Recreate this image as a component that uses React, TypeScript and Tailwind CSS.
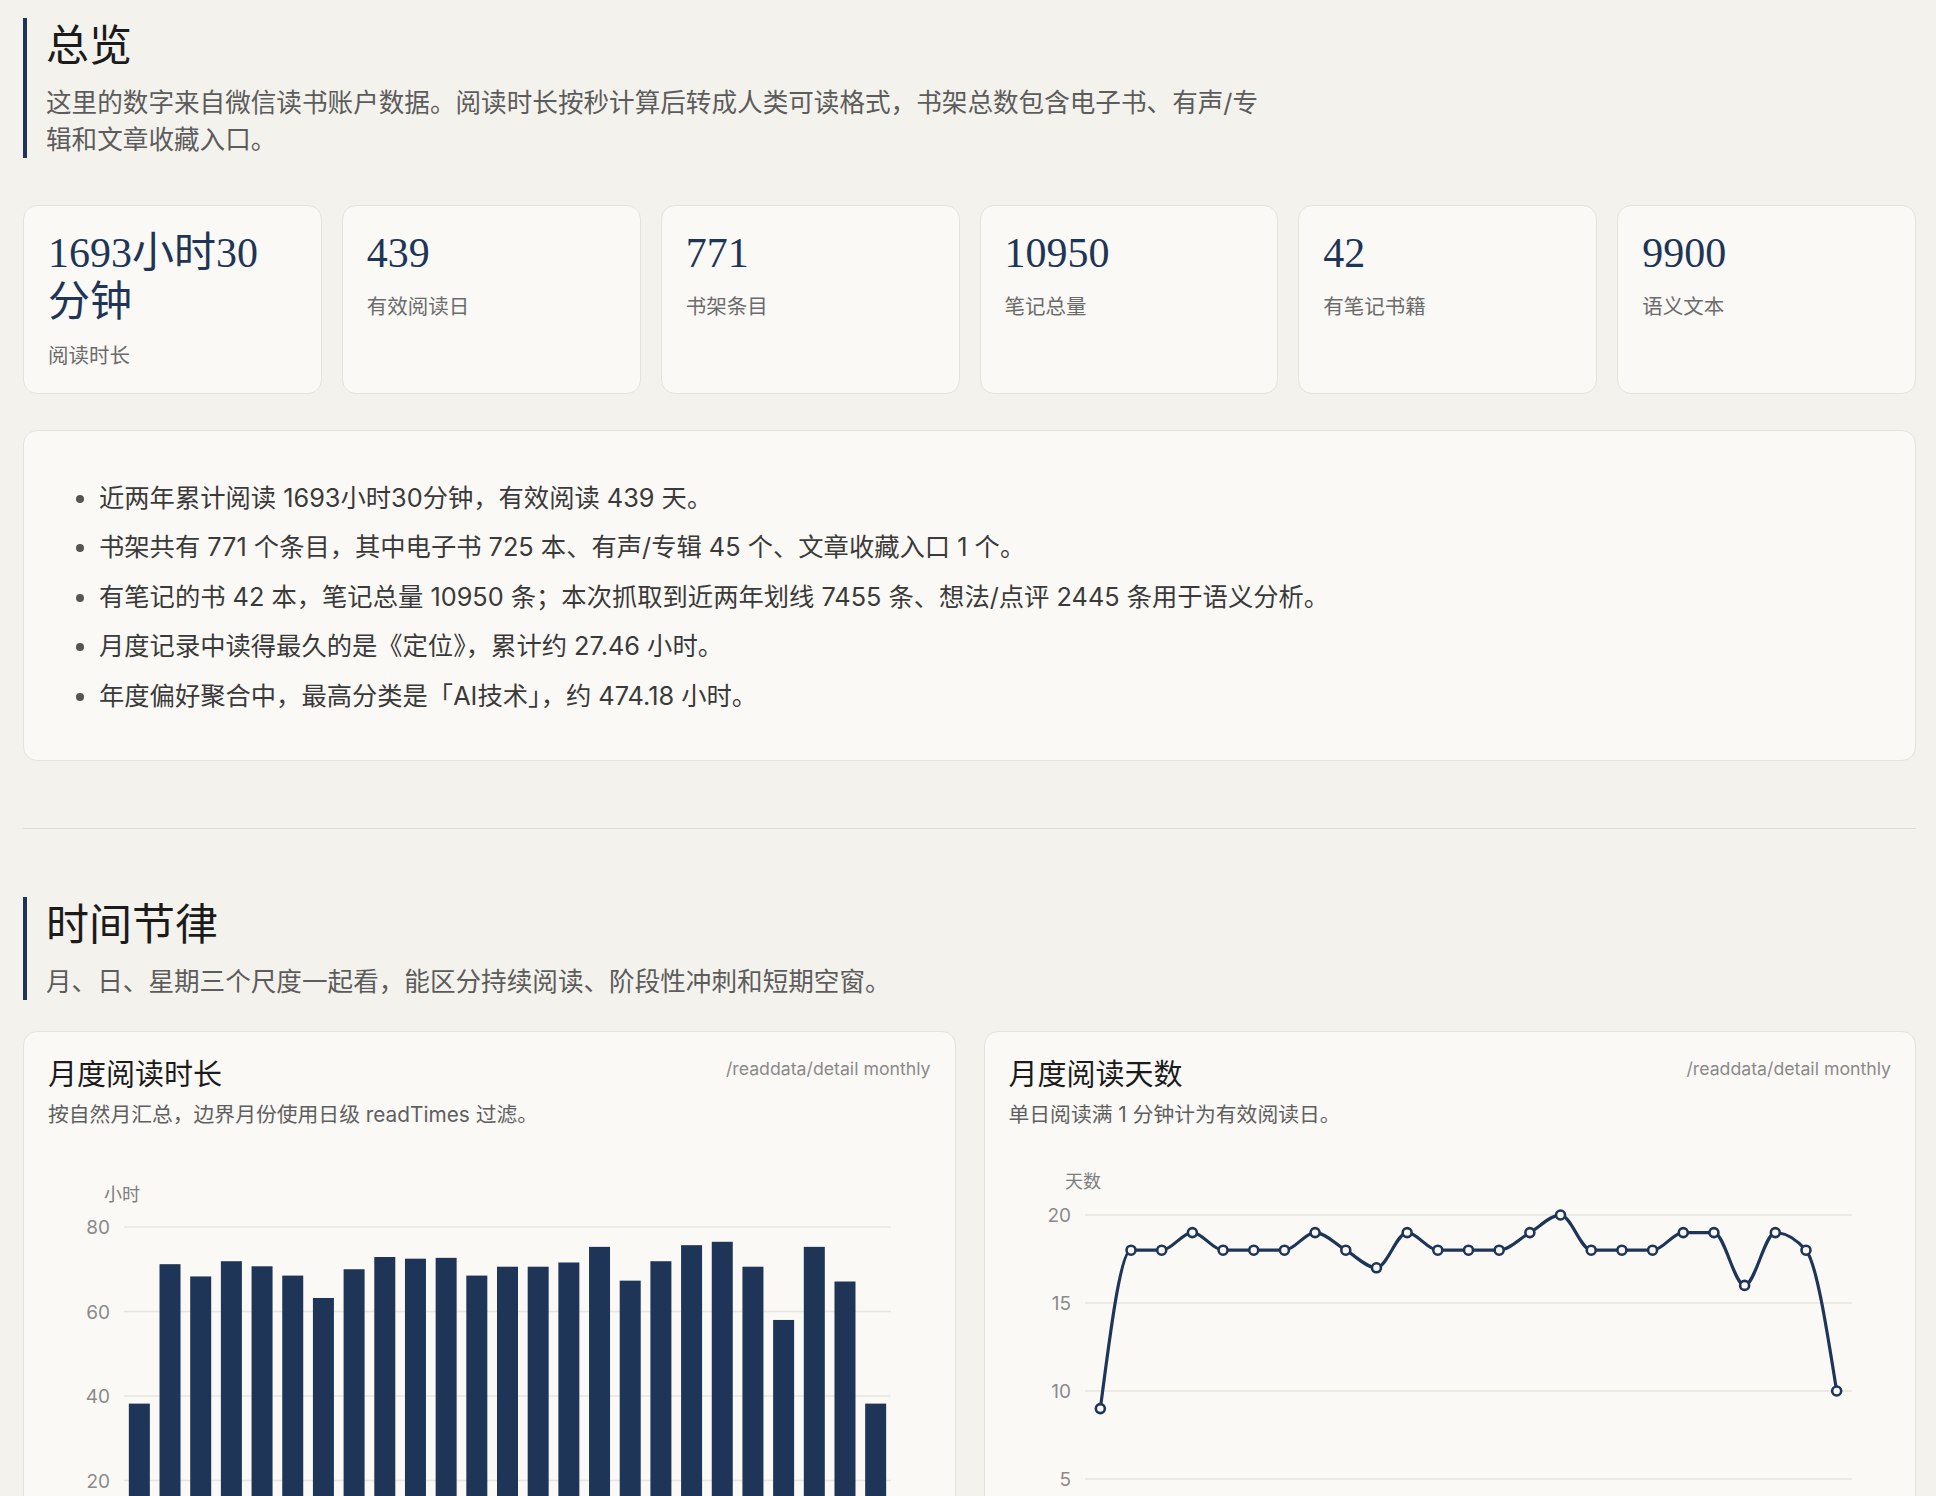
import React from 'react';

const NAVY = '#1e3557';

const stats = [
  { value: '1693小时30分钟', label: '阅读时长' },
  { value: '439', label: '有效阅读日' },
  { value: '771', label: '书架条目' },
  { value: '10950', label: '笔记总量' },
  { value: '42', label: '有笔记书籍' },
  { value: '9900', label: '语义文本' },
];

const highlights = [
  '近两年累计阅读 1693小时30分钟，有效阅读 439 天。',
  '书架共有 771 个条目，其中电子书 725 本、有声/专辑 45 个、文章收藏入口 1 个。',
  '有笔记的书 42 本，笔记总量 10950 条；本次抓取到近两年划线 7455 条、想法/点评 2445 条用于语义分析。',
  '月度记录中读得最久的是《定位》，累计约 27.46 小时。',
  '年度偏好聚合中，最高分类是「AI技术」，约 474.18 小时。',
];

const monthlyHours = [
  38.2, 71.2, 68.3, 71.9, 70.7, 68.5, 63.2, 70.0, 72.9, 72.5, 72.7, 68.5, 70.6,
  70.6, 71.6, 75.3, 67.3, 71.9, 75.7, 76.5, 70.6, 58.0, 75.3, 67.1, 38.2,
];

const monthlyDays = [
  9, 18, 18, 19, 18, 18, 18, 19, 18, 17, 19, 18, 18, 18, 19, 20, 18, 18, 18, 19, 19, 16, 19, 18, 10,
];

// chart frame shared by both cards
const GX0 = 76;
const GX1 = 843;
const STEP = (GX1 - GX0) / 25;
const cx = (i: number) => GX0 + STEP * (i + 0.5);
const SANS = "Inter, 'Noto Sans CJK SC', sans-serif";

// monotone-x cubic, same idea as d3.curveMonotoneX
function monotonePath(pts: [number, number][]) {
  const sign = (v: number) => (v < 0 ? -1 : v > 0 ? 1 : 0);
  const n = pts.length;
  const t: number[] = new Array(n).fill(0);
  for (let i = 1; i < n - 1; i++) {
    const [x0, y0] = pts[i - 1];
    const [x1, y1] = pts[i];
    const [x2, y2] = pts[i + 1];
    const h0 = x1 - x0;
    const h1 = x2 - x1;
    const s0 = (y1 - y0) / h0;
    const s1 = (y2 - y1) / h1;
    const p = (s0 * h1 + s1 * h0) / (h0 + h1);
    t[i] = (sign(s0) + sign(s1)) * Math.min(Math.abs(s0), Math.abs(s1), 0.5 * Math.abs(p)) || 0;
  }
  const e0 = (pts[1][1] - pts[0][1]) / (pts[1][0] - pts[0][0]);
  t[0] = (3 * e0 - t[1]) / 2;
  const e1 = (pts[n - 1][1] - pts[n - 2][1]) / (pts[n - 1][0] - pts[n - 2][0]);
  t[n - 1] = (3 * e1 - t[n - 2]) / 2;
  let d = `M${pts[0][0]},${pts[0][1]}`;
  for (let i = 0; i < n - 1; i++) {
    const [x0, y0] = pts[i];
    const [x1, y1] = pts[i + 1];
    const dx = (x1 - x0) / 3;
    d += ` C${x0 + dx},${y0 + dx * t[i]} ${x1 - dx},${y1 - dx * t[i + 1]} ${x1},${y1}`;
  }
  return d;
}

const SectionHeader: React.FC<{ title: string; children: React.ReactNode }> = ({ title, children }) => (
  <header className="border-l-4 border-[#1e3557] pl-[19px]">
    <h2 className="font-['Liberation_Serif','Noto_Sans_CJK_SC',serif] text-[43px] leading-[58px] font-normal text-[#1b1b1b]">
      {title}
    </h2>
    <p className="mt-2 max-w-[1228px] text-[25.6px] leading-[37px] text-[#5c5c5c]">{children}</p>
  </header>
);

const ChartCard: React.FC<{ title: string; sub: string; children: React.ReactNode }> = ({ title, sub, children }) => (
  <div className="rounded-[14px] border border-[#e7e3db] bg-[#faf9f6] px-6 pt-6 pb-6">
    <div className="flex items-start justify-between">
      <h3 className="font-['Liberation_Serif','Noto_Sans_CJK_SC',serif] text-[29px] leading-[38px] font-normal text-[#1b1b1b]">
        {title}
      </h3>
      <span className="text-[17.7px] leading-[26px] text-[#8a8a8a]">/readdata/detail monthly</span>
    </div>
    <p className="mt-[6px] text-[20.8px] leading-[30px] text-[#5f5f5f]">{sub}</p>
    <div className="mt-[10px]">{children}</div>
  </div>
);

const HoursChart: React.FC = () => {
  const y = (v: number) => 425 - v * 4.225;
  const ticks = [20, 40, 60, 80];
  return (
    <svg width={882} height={440} viewBox="0 0 882 440" fontFamily={SANS}>
      <text x={56} y={61} fontSize={18} fill="#7d7d7d">小时</text>
      {ticks.map((t) => (
        <g key={t}>
          <line x1={GX0} x2={GX1} y1={y(t)} y2={y(t)} stroke="#e8e5de" strokeWidth={1.5} />
          <text x={62} y={y(t) + 7} fontSize={19} fill="#8a8a8a" textAnchor="end">{t}</text>
        </g>
      ))}
      <line x1={GX0} x2={GX1} y1={425} y2={425} stroke="#cfcac0" strokeWidth={1.5} />
      {monthlyHours.map((v, i) => (
        <rect key={i} x={cx(i) - 10.5} y={y(v)} width={21} height={425 - y(v)} fill={NAVY} />
      ))}
    </svg>
  );
};

const DaysChart: React.FC = () => {
  const y = (v: number) => 427 - v * 17.6;
  const ticks = [5, 10, 15, 20];
  const pts = monthlyDays.map((v, i) => [cx(i), y(v)] as [number, number]);
  return (
    <svg width={882} height={440} viewBox="0 0 882 440" fontFamily={SANS}>
      <text x={56} y={48} fontSize={18} fill="#7d7d7d">天数</text>
      {ticks.map((t) => (
        <g key={t}>
          <line x1={GX0} x2={GX1} y1={y(t)} y2={y(t)} stroke="#e8e5de" strokeWidth={1.5} />
          <text x={62} y={y(t) + 7} fontSize={19} fill="#8a8a8a" textAnchor="end">{t}</text>
        </g>
      ))}
      <line x1={GX0} x2={GX1} y1={427} y2={427} stroke="#cfcac0" strokeWidth={1.5} />
      <path d={monotonePath(pts)} fill="none" stroke={NAVY} strokeWidth={3.2} />
      {pts.map(([px, py], i) => (
        <circle key={i} cx={px} cy={py} r={4.5} fill="#faf9f6" stroke={NAVY} strokeWidth={2.6} />
      ))}
    </svg>
  );
};

export default function App() {
  return (
    <div className="min-h-screen bg-[#f4f2ed] pl-[23px] pr-[20px] pt-[18px] pb-16 font-['Inter','Noto_Sans_CJK_SC',sans-serif]">
      <section className="border-b border-[#e2ded5] pb-[67px]">
        <SectionHeader title="总览">
          这里的数字来自微信读书账户数据。阅读时长按秒计算后转成人类可读格式，书架总数包含电子书、有声/专辑和文章收藏入口。
        </SectionHeader>

        <div className="mt-[47px] grid grid-cols-6 gap-5">
          {stats.map((s) => (
            <div key={s.label} className="rounded-[14px] border border-[#e7e3db] bg-[#faf9f6] px-6 pt-[23px] pb-[23px]">
              <div className="font-['Liberation_Serif','Noto_Sans_CJK_SC',serif] text-[42px] leading-[49px] text-[#1e3557]">
                {s.value}
              </div>
              <div className="mt-[15px] text-[20.5px] leading-[28px] text-[#6b6b6b]">{s.label}</div>
            </div>
          ))}
        </div>

        <div className="mt-9 rounded-[14px] border border-[#e7e3db] bg-[#faf9f6] px-[26px] pt-[42px] pb-[40px]">
          <ul className="list-disc pl-[49px] text-[25.3px] leading-[49.4px] text-[#3a3a3a] marker:text-[#555]">
            {highlights.map((h) => (
              <li key={h}>{h}</li>
            ))}
          </ul>
        </div>
      </section>

      <section className="pt-[68px]">
        <SectionHeader title="时间节律">
          月、日、星期三个尺度一起看，能区分持续阅读、阶段性冲刺和短期空窗。
        </SectionHeader>

        <div className="mt-[31px] grid grid-cols-2 gap-7">
          <ChartCard title="月度阅读时长" sub="按自然月汇总，边界月份使用日级 readTimes 过滤。">
            <HoursChart />
          </ChartCard>
          <ChartCard title="月度阅读天数" sub="单日阅读满 1 分钟计为有效阅读日。">
            <DaysChart />
          </ChartCard>
        </div>
      </section>
    </div>
  );
}
